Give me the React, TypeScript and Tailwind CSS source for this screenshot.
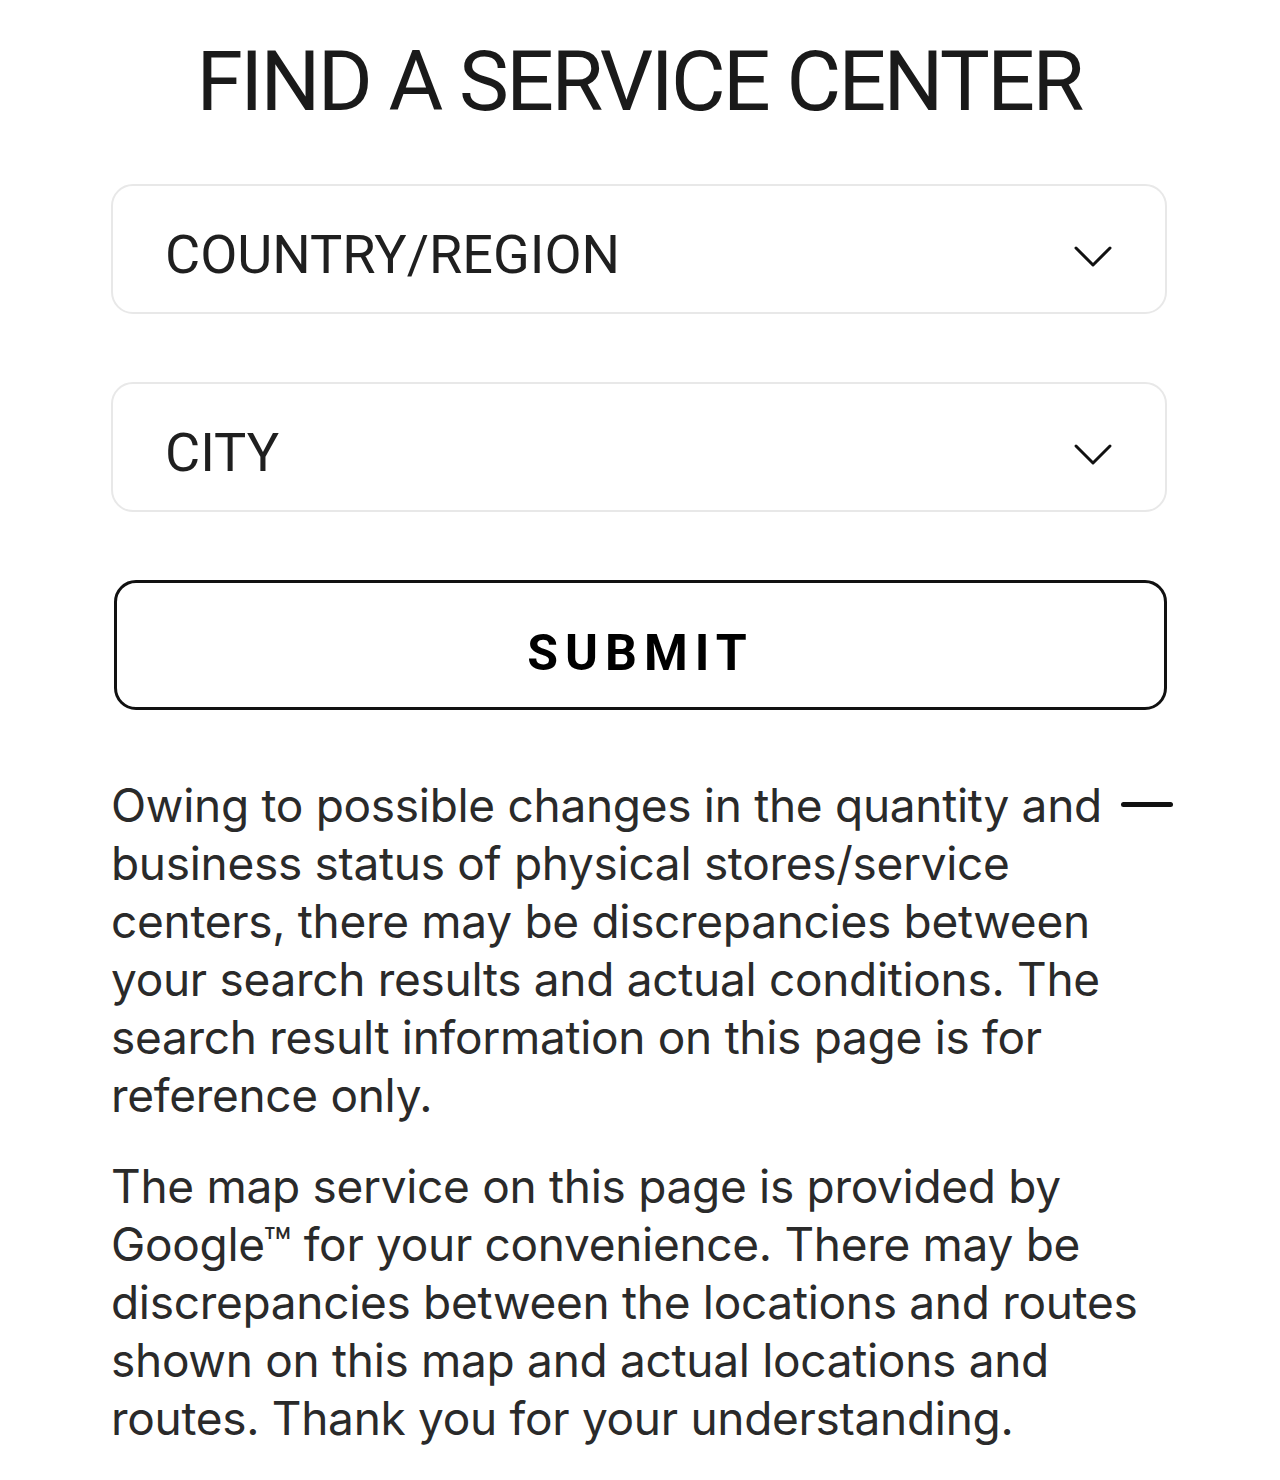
const selects = ["COUNTRY/REGION", "CITY"];

function Chevron() {
  return (
    <svg width="40" height="24" viewBox="0 0 40 24" fill="none" className="shrink-0 mt-[6px]">
      <path d="M3 3 L20 20 L37 3" stroke="#111" strokeWidth="3" strokeLinecap="round" strokeLinejoin="round" />
    </svg>
  );
}

export default function App() {
  return (
    <div className="min-h-[1480px] bg-white text-[#222] font-['Inter',sans-serif]">
      <div className="w-[1056px] ml-[111px] pt-[36px]">
        {/* Title */}
        <h1 className="text-center font-['Roboto',sans-serif] text-[84px] leading-[92px] tracking-[-2.6px] text-[#1a1a1a]">
          FIND A SERVICE CENTER
        </h1>

        {/* Selects */}
        <div className="mt-[56px] flex flex-col gap-[68px]">
          {selects.map((label) => (
            <div
              key={label}
              className="h-[130px] flex items-center justify-between rounded-[22px] border-2 border-[#e8e8e8] pl-[52px] pr-[52px] pt-[10px]"
            >
              <span className="font-['Roboto',sans-serif] text-[54px] tracking-[0px] text-[#1f1f1f]">
                {label}
              </span>
              <Chevron />
            </div>
          ))}
        </div>

        {/* Submit */}
        <button className="mt-[68px] ml-[3px] w-[1053px] h-[130px] rounded-[22px] border-[3px] border-[#111] bg-white flex items-center justify-center pt-[16px]">
          <span className="font-['Roboto',sans-serif] font-bold text-[50px] tracking-[7px] text-black">
            SUBMIT
          </span>
        </button>

        {/* Notes */}
        <div className="relative mt-[66px] text-[46px] leading-[58px] tracking-[-0.3px] text-[#2a2a2a]">
          <span className="absolute right-[-6px] top-[26px] w-[52px] h-[5px] rounded-full bg-[#111]" />
          <p className="pr-[50px]">
            Owing to possible changes in the quantity and business status of physical stores/service
            centers, there may be discrepancies between your search results and actual conditions. The
            search result information on this page is for reference only.
          </p>
          <p className="mt-[33px]">
            The map service on this page is provided by Google™ for your convenience. There may be
            discrepancies between the locations and routes shown on this map and actual locations and
            routes. Thank you for your understanding.
          </p>
        </div>
      </div>
    </div>
  );
}
